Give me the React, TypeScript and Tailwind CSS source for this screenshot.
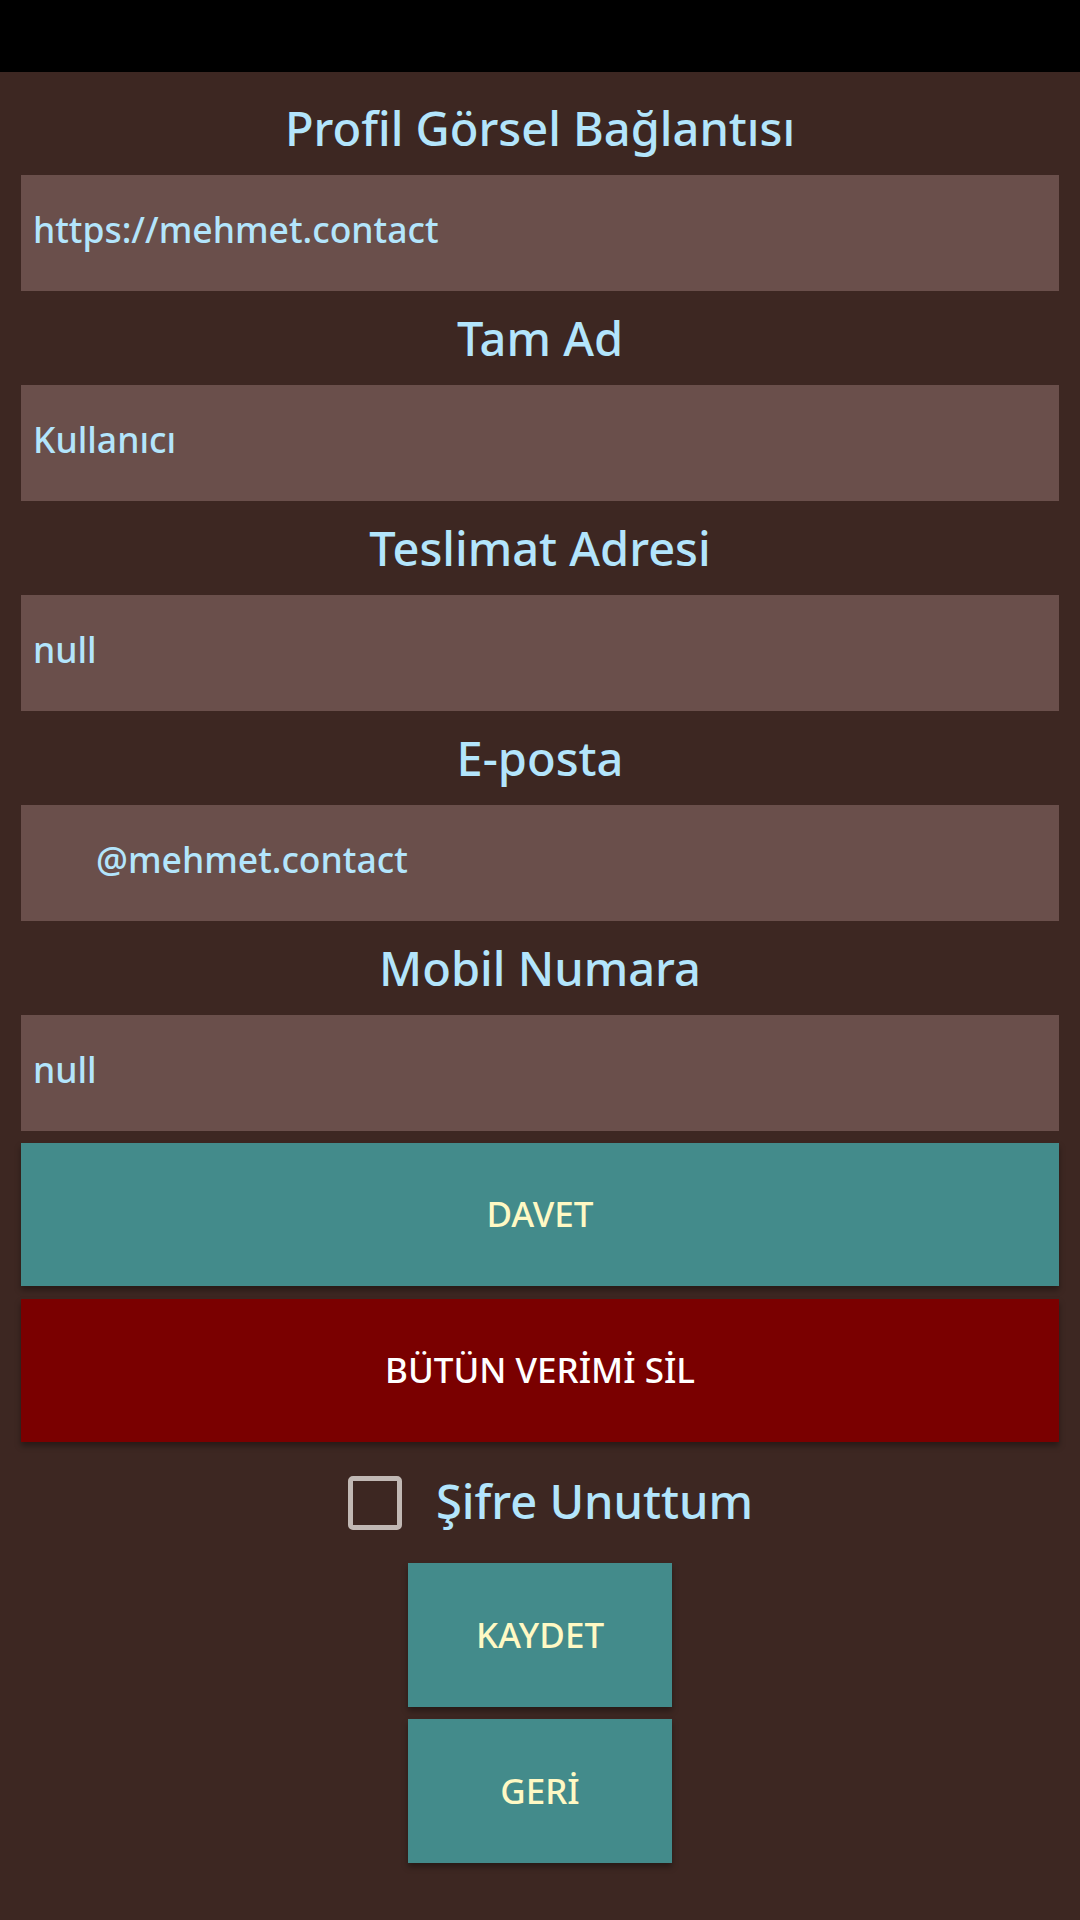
const font = { fontFamily: '"Noto Sans", "Open Sans", sans-serif' };

const fields = [
  { label: "Profil Görsel Bağlantısı", value: "https://mehmet.contact", indent: false },
  { label: "Tam Ad", value: "Kullanıcı", indent: false },
  { label: "Teslimat Adresi", value: "null", indent: false },
  { label: "E-posta", value: "@mehmet.contact", indent: true },
  { label: "Mobil Numara", value: "null", indent: false },
];

function Field({ label, value, indent }: { label: string; value: string; indent: boolean }) {
  return (
    <>
      <div className="flex h-[94px] items-center justify-center text-[47px] font-medium leading-none text-[#b3e5fc]">
        {label}
      </div>
      <div
        className={`flex h-[116px] items-center bg-[#6a4f4b] pb-[6px] text-[35.5px] font-medium leading-none text-[#b3e5fc] ${
          indent ? "pl-[75px]" : "pl-[12px]"
        }`}
      >
        {value}
      </div>
    </>
  );
}

export default function App() {
  return (
    <div className="flex h-[1920px] w-[1080px] flex-col bg-[#3d2722]" style={font}>
      <div className="h-[72px] bg-black" />
      <div className="flex flex-col px-[21px] pt-[9px]">
        {fields.map((f) => (
          <Field key={f.label} {...f} />
        ))}

        <button className="mt-[12px] flex h-[143px] items-center justify-center bg-[#438b8b] text-[35px] font-medium text-[#fff9c4] shadow-[0_4px_6px_rgba(0,0,0,0.35)]">
          DAVET
        </button>
        <button className="mt-[13px] flex h-[143px] items-center justify-center bg-[#7a0000] text-[35px] font-medium text-white shadow-[0_4px_6px_rgba(0,0,0,0.35)]">
          BÜTÜN VERİMİ SİL
        </button>

        <div className="mt-[13px] flex h-[96px] items-center justify-center gap-[34px] pl-[21px]">
          <span className="h-[54px] w-[54px] rounded-[5px] border-[5px] border-[#c1b8b4]" />
          <span className="pb-[4px] text-[47px] font-medium leading-none text-[#b3e5fc]">Şifre Unuttum</span>
        </div>

        <div className="flex flex-col items-center gap-[12px]">
          <button className="mt-[12px] flex h-[144px] w-[264px] items-center justify-center bg-[#438b8b] text-[35px] font-medium text-[#fff9c4] shadow-[0_4px_6px_rgba(0,0,0,0.35)]">
            KAYDET
          </button>
          <button className="flex h-[144px] w-[264px] items-center justify-center bg-[#438b8b] text-[35px] font-medium text-[#fff9c4] shadow-[0_4px_6px_rgba(0,0,0,0.35)]">
            GERİ
          </button>
        </div>
      </div>
    </div>
  );
}
